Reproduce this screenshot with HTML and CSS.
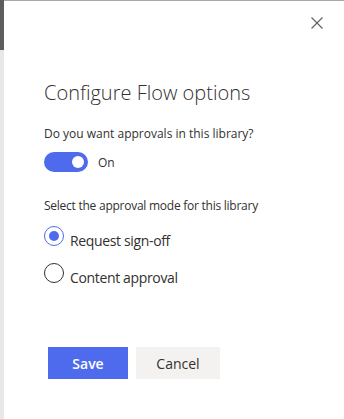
FILE: index.html
```html
<!DOCTYPE html>
<html>
<head>
<meta charset="utf-8">
<link rel="stylesheet" href="styles.css">
</head>
<body>
<div class="page">
  <div class="rail"></div>
  <div class="panel">
    <div class="topbar">
      <button class="close" aria-label="Close">
        <svg width="12" height="12" viewBox="0 0 12 12"><path d="M0.5 0.5 L11.5 11.5 M11.5 0.5 L0.5 11.5" stroke="#605e5c" stroke-width="1.1" fill="none"/></svg>
      </button>
    </div>
    <h1 class="title">Configure Flow options</h1>
    <div class="field">
      <div class="label">Do you want approvals in this library?</div>
      <div class="toggle-row">
        <span class="toggle"><span class="knob"></span></span>
        <span class="toggle-text">On</span>
      </div>
    </div>
    <div class="field mode">
      <div class="label narrow">Select the approval mode for this library</div>
      <div class="choices">
        <div class="choice"><span class="radio checked"></span><span class="choice-text">Request sign-off</span></div>
        <div class="choice"><span class="radio"></span><span class="choice-text">Content approval</span></div>
      </div>
    </div>
    <div class="actions">
      <button class="btn primary">Save</button>
      <button class="btn secondary">Cancel</button>
    </div>
  </div>
</div>
</body>
</html>
```

FILE: styles.css
```css
* { box-sizing: border-box; }
html, body { margin: 0; padding: 0; background: #fff; }
body { font-family: "Segoe UI", "Open Sans", "Noto Sans", sans-serif; color: #323130; }
.page { display: flex; width: 344px; height: 419px; overflow: hidden; }
.rail { width: 4px; flex: none; background: linear-gradient(#5d5d5d 0 50px, #e8e8e8 50px); }
.panel { flex: 1; border-top: 1px solid #a8a8a8; padding-left: 40px; display: flex; flex-direction: column; }
.topbar { display: flex; justify-content: flex-end; padding: 15px 20px 0 0; height: 44px; }
.close { width: 14px; height: 14px; padding: 0; border: 0; background: none; display: flex; align-items: center; justify-content: center; }
.title { margin: 34px 0 0; font-size: 20px; font-weight: 300; line-height: 28px; color: #323130; }
.field { margin-top: 19px; }
.label { font-size: 12px; line-height: 16px; color: #323130; }
.label.narrow { letter-spacing: -0.25px; }
.toggle-row { display: flex; align-items: center; margin-top: 10px; }
.toggle { width: 44px; height: 20px; border-radius: 10px; background: #4f6bed; display: flex; align-items: center; justify-content: flex-end; padding-right: 4px; }
.knob { width: 12px; height: 12px; border-radius: 50%; background: #fff; }
.toggle-text { margin-left: 10px; font-size: 12px; color: #323130; }
.mode { margin-top: 26px; }
.choices { display: flex; flex-direction: column; gap: 12px; margin-top: 12px; }
.choice { display: flex; align-items: flex-start; }
.radio { width: 20px; height: 20px; border-radius: 50%; border: 1px solid #323130; background: #fff; display: flex; align-items: center; justify-content: center; flex: none; }
.radio.checked { border-color: #4f6bed; }
.radio.checked::after { content: ""; width: 10px; height: 10px; border-radius: 50%; background: #4f6bed; }
.choice-text { margin-left: 6px; margin-top: 5px; font-size: 14px; line-height: 20px; letter-spacing: -0.35px; color: #323130; }
.actions { display: flex; gap: 8px; margin-top: 59px; padding-left: 4px; }
.btn { height: 32px; width: 80px; padding: 0; border: 0; border-radius: 0; background: #f3f2f1; color: #323130; font-family: inherit; font-size: 14px; }
.btn.secondary { width: 84px; }
.btn.primary { background: #4f6bed; color: #fff; font-weight: 600; }
```
